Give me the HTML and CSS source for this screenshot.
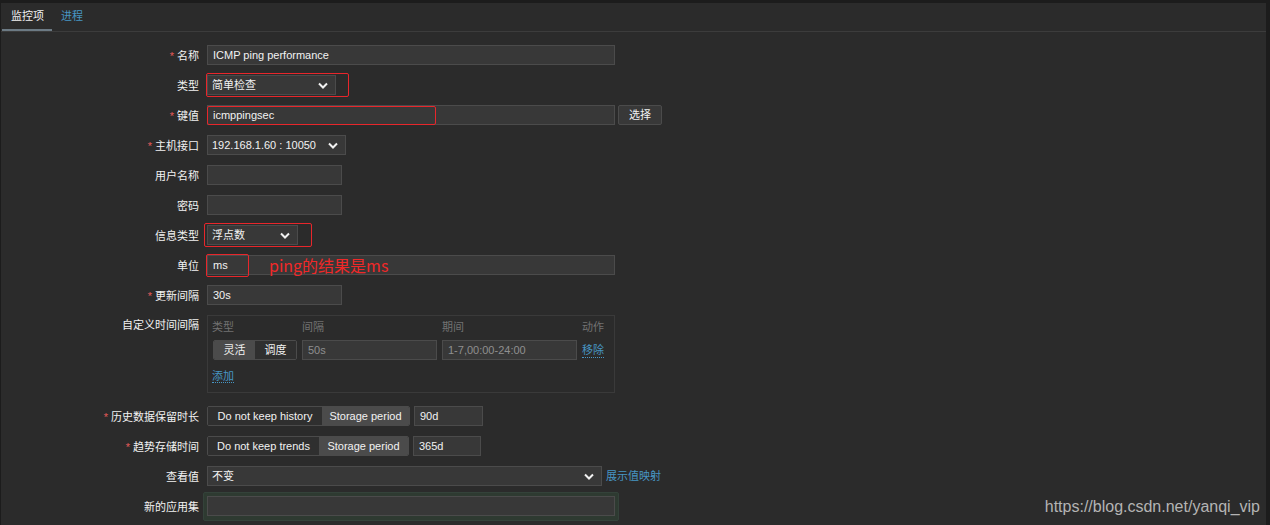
FILE: index.html
```html
<!DOCTYPE html>
<html lang="zh">
<head>
<meta charset="utf-8">
<title>监控项</title>
<link rel="stylesheet" href="styles.css">
</head>
<body>
<div class="panel">
  <div class="tabs">
    <div class="tab active">监控项</div>
    <div class="tab link">进程</div>
  </div>
  <div class="form">
    <div class="row">
      <div class="label"><span class="req">*</span>名称</div>
      <div class="input w407">ICMP ping performance</div>
    </div>
    <div class="row">
      <div class="label">类型</div>
      <div class="marked">
        <div class="select w128">简单检查<svg class="chev" viewBox="0 0 10 6"><path d="M1 1l4 4 4-4"/></svg></div>
        <div class="redbox rb-type"></div>
      </div>
    </div>
    <div class="row">
      <div class="label"><span class="req">*</span>键值</div>
      <div class="marked">
        <div class="input w407">icmppingsec</div>
        <div class="redbox rb-key"></div>
      </div>
      <div class="btn">选择</div>
    </div>
    <div class="row">
      <div class="label"><span class="req">*</span>主机接口</div>
      <div class="select w138">192.168.1.60 : 10050<svg class="chev" viewBox="0 0 10 6"><path d="M1 1l4 4 4-4"/></svg></div>
    </div>
    <div class="row">
      <div class="label">用户名称</div>
      <div class="input w134"></div>
    </div>
    <div class="row">
      <div class="label">密码</div>
      <div class="input w134"></div>
    </div>
    <div class="row">
      <div class="label">信息类型</div>
      <div class="marked">
        <div class="select w90">浮点数<svg class="chev" viewBox="0 0 10 6"><path d="M1 1l4 4 4-4"/></svg></div>
        <div class="redbox rb-info"></div>
      </div>
    </div>
    <div class="row">
      <div class="label">单位</div>
      <div class="marked">
        <div class="input w407">ms</div>
        <div class="redbox rb-unit"></div>
        <div class="note">ping的结果是ms</div>
      </div>
    </div>
    <div class="row">
      <div class="label"><span class="req">*</span>更新间隔</div>
      <div class="input w134">30s</div>
    </div>
    <div class="row top">
      <div class="label">自定义时间间隔</div>
      <div class="intervals">
        <div class="igrid">
          <div class="ih">类型</div>
          <div class="ih">间隔</div>
          <div class="ih">期间</div>
          <div class="ih">动作</div>
          <div class="seg small">
            <div class="opt on">灵活</div>
            <div class="opt">调度</div>
          </div>
          <div class="input dim">50s</div>
          <div class="input dim">1-7,00:00-24:00</div>
          <div class="a">移除</div>
        </div>
        <div class="add"><span class="a">添加</span></div>
      </div>
    </div>
    <div class="row">
      <div class="label"><span class="req">*</span>历史数据保留时长</div>
      <div class="seg">
        <div class="opt o115">Do not keep history</div>
        <div class="opt on o88">Storage period</div>
      </div>
      <div class="input w68 ml4">90d</div>
    </div>
    <div class="row">
      <div class="label"><span class="req">*</span>趋势存储时间</div>
      <div class="seg">
        <div class="opt o112">Do not keep trends</div>
        <div class="opt on o90">Storage period</div>
      </div>
      <div class="input w67 ml4">365d</div>
    </div>
    <div class="row">
      <div class="label">查看值</div>
      <div class="select w394">不变<svg class="chev" viewBox="0 0 10 6"><path d="M1 1l4 4 4-4"/></svg></div>
      <span class="a plain ml4">展示值映射</span>
    </div>
    <div class="row r-app">
      <div class="label">新的应用集</div>
      <div class="hl"><div class="input w407"></div></div>
    </div>
  </div>
  <div class="watermark">https://blog.csdn.net/yanqi_vip</div>
</div>
</body>
</html>
```
FILE: styles.css
```css
html, body {
  margin: 0;
  padding: 0;
  background: #1c1c1c;
  height: 525px;
  overflow: hidden;
}
body {
  font-family: "Liberation Sans", Arial, "Noto Sans CJK SC", sans-serif;
  font-size: 11px;
  color: #f2f2f2;
}
.panel {
  position: relative;
  margin: 3px 4px 0 1px;
  height: 522px;
  background: #2b2b2b;
}
.tabs {
  display: flex;
  height: 28px;
  border-bottom: 1px solid #3c3c3c;
  padding-left: 1px;
}
.tab {
  padding: 0 9px;
  line-height: 26px;
  height: 28px;
  box-sizing: border-box;
  white-space: nowrap;
  font-size: 11px;
}
.tab.active {
  width: 50px;
  padding: 0 0 0 9px;
  border-bottom: 2px solid #6c7a84;
  color: #f2f2f2;
}
.tab.link { color: #4796c4; }
.form { padding-top: 13px; }
.row {
  display: flex;
  align-items: center;
  height: 20px;
  margin-bottom: 10px;
}
.row.top {
  align-items: flex-start;
  height: auto;
  margin-bottom: 13px;
}
.row.top .label { line-height: 20px; }
.r-app { height: 28px; margin-top: -4px; }
.label {
  width: 198px;
  margin-right: 8px;
  text-align: right;
  white-space: nowrap;
  color: #f2f2f2;
}
.req {
  color: #e45959;
  margin-right: 3px;
}
.input, .select {
  box-sizing: border-box;
  height: 20px;
  background: #383838;
  border: 1px solid #4b4b4b;
  padding: 0 5px;
  line-height: 18px;
  white-space: nowrap;
  color: #f2f2f2;
}
.select {
  display: flex;
  align-items: center;
  justify-content: space-between;
  padding-right: 7px;
  padding-left: 4px;
}
.chev {
  width: 10px;
  height: 7px;
  fill: none;
  stroke: #f2f2f2;
  stroke-width: 2;
}
.w407 { width: 408px; }
.w128 { width: 129px; }
.w138 { width: 139px; }
.w134 { width: 135px; }
.w90 { width: 91px; }
.w394 { width: 395px; }
.w68 { width: 69px; }
.w67 { width: 68px; }
.ml4 { margin-left: 4px; }
.marked { position: relative; }
.redbox {
  position: absolute;
  border: 1px solid #e8262b;
  border-radius: 2px;
  box-sizing: border-box;
}
.rb-type { left: -1px; top: -2px; width: 143px; height: 24px; }
.rb-key { left: 0; top: 1px; width: 229px; height: 19px; }
.rb-info { left: -3px; top: -2px; width: 108px; height: 24px; }
.rb-unit { left: -1px; top: -1px; width: 43px; height: 23px; }
.note {
  position: absolute;
  left: 62px;
  top: 0;
  line-height: 21px;
  font-size: 16px;
  color: #f02828;
  white-space: nowrap;
  font-family: "Noto Sans CJK SC", "Liberation Sans", sans-serif;
}
.btn {
  box-sizing: border-box;
  height: 20px;
  width: 44px;
  margin-left: 3px;
  border: 1px solid #4b4b4b;
  background: #383838;
  border-radius: 2px;
  text-align: center;
  line-height: 18px;
}
.intervals {
  box-sizing: border-box;
  width: 408px;
  height: 78px;
  border: 1px solid #3a3a3a;
  padding: 4px 4px 0 4px;
}
.igrid {
  display: grid;
  grid-template-columns: 85px 135px 135px auto;
  column-gap: 5px;
  row-gap: 6px;
  align-items: center;
}
.ih {
  color: #727272;
  line-height: 14px;
}
.seg {
  display: flex;
  height: 20px;
  box-sizing: border-box;
  border: 1px solid #4b4b4b;
  border-radius: 2px;
  overflow: hidden;
}
.seg .opt {
  box-sizing: border-box;
  line-height: 18px;
  text-align: center;
  background: #2f2f2f;
  white-space: nowrap;
}
.seg .opt.on { background: #4b4b4b; }
.seg.small { margin-left: 1px; width: 84px; }
.seg.small .opt { flex: 1; }
.o115 { width: 114px; }
.o88 { width: 87px; }
.o112 { width: 111px; }
.o90 { width: 89px; }
.input.dim { color: #8f8f8f; }
.a {
  color: #4796c4;
  border-bottom: 1px dotted #4796c4;
  line-height: 14px;
  justify-self: start;
}
.a.plain { border-bottom: none; }
.add { margin-top: 9px; }
.hl {
  box-sizing: border-box;
  padding: 3px;
  margin-left: -4px;
  background: #2e3a31;
  border: 1px solid #34423a;
  border-radius: 2px;
  height: 29px;
  display: flex;
  align-items: center;
}
.watermark {
  position: absolute;
  right: 6px;
  bottom: 9px;
  font-size: 16px;
  color: #b4b4b4;
  font-family: "Liberation Sans", Arial, sans-serif;
}
```
